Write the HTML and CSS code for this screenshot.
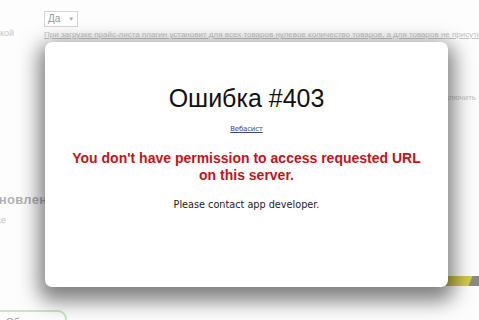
FILE: index.html
```html
<!DOCTYPE html>
<html lang="ru">
	<head>
		<meta charset="UTF-8">
		<meta name="viewport" content="width=device-width, initial-scale=1.0">
		<title>Ошибка #403</title>
		<link rel="stylesheet" href="styles.css">
	</head>
	<body>
		<!-- страница настроек под окном -->
		<div class="page">
			<div class="field">
				<div class="label"><span>Обнулять остаток перед загрузкой</span></div>
				<div class="value">
					<div class="select">Да <span class="arrow">&#9660;</span></div>
					<div class="hint">При загрузке прайс-листа плагин установит для всех товаров нулевое количество товаров, а для товаров не присутствующих в прайсе</div>
				</div>
			</div>

			<div class="field second">
				<div class="label"></div>
				<div class="value">
					<div class="hint plain">Если опция включена, товары без остатка будут скрыты, <span class="tail">выключить</span></div>
				</div>
			</div>

			<h3 class="section">Обновление остатков</h3>

			<div class="field third">
				<div class="label"><span>Обновлять все</span></div>
				<div class="value"></div>
			</div>

			<div class="strip"></div>

			<div class="bottom">
				<div class="button">Обновить</div>
			</div>
		</div>

		<!-- окно ошибки -->
		<div class="dialog">
			<h1 class="title">Ошибка #403</h1>
			<a class="link" href="#">Вебасист</a>
			<p class="error">You don't have permission to access requested URL<br>on this server.</p>
			<p class="note">Please contact app developer.</p>
		</div>
	</body>
</html>
```

FILE: styles.css
```css
* {
	margin: 0;
	padding: 0;
	box-sizing: border-box;
}

html {
	height: 100%;
	background: #fdfdfd;
}

body {
	font-family: "Liberation Sans", Arial, sans-serif;
	height: 100%;
	overflow: hidden;
	color: #bbb;
}

.page {
	padding-top: 11px;
}

/* строка настройки */
.field {
	display: grid;
	grid-template-columns: 44px 1fr;
}

.label {
	display: flex;
	justify-content: flex-end;
	overflow: hidden;
	white-space: nowrap;
	font-size: 9px;
	padding-top: 17px;
	padding-right: 30px;
	color: #c4c4c4;
}

.value {
	overflow: hidden;
	white-space: nowrap;
}

.select {
	width: 34px;
	height: 16px;
	line-height: 14px;
	border: 1px solid #d6d6d6;
	background: #fff;
	font-size: 10px;
	color: #999;
	padding-left: 3px;
}

.arrow {
	font-size: 6px;
	margin-left: 5px;
	color: #aaa;
	vertical-align: 1px;
}

.hint {
	font-size: 8px;
	color: #c2c2c2;
	text-decoration: underline;
	margin-top: 3px;
}

.second {
	margin-top: 51px;
}

.hint.plain {
	text-decoration: none;
	display: flex;
	justify-content: flex-end;
	width: 432px;
	overflow: hidden;
}

.section {
	font-size: 13px;
	font-weight: bold;
	color: #b2b2b2;
	margin-top: 85px;
	margin-left: -20px;
	white-space: nowrap;
	letter-spacing: .3px;
}

.third .label {
	padding-top: 8px;
	padding-right: 38px;
}

/* жёлтая полоса справа */
.strip {
	margin-top: 51px;
	margin-left: 446px;
	height: 10px;
	background: linear-gradient(112deg, #c6bd3c 0%, #d4cb55 70%, #8f8c80 73%, #8a8a84 100%);
}

.bottom {
	margin-top: 24px;
	margin-left: -12px;
}

.button {
	width: 79px;
	height: 22px;
	border: 2px solid #cfe5bd;
	border-radius: 9px;
	font-size: 10px;
	color: #999;
	padding: 5px 0 0 16px;
}

/* окно поверх страницы */
.dialog {
	position: absolute;
	left: 45px;
	top: 42px;
	width: 403px;
	height: 245px;
	background: #fff;
	border-radius: 7px;
	box-shadow: 0 8px 20px 6px rgba(0, 0, 0, .5);
	text-align: center;
	padding-top: 41px;
}

.title {
	font-size: 25px;
	font-weight: normal;
	line-height: 30px;
	color: #111;
}

.link {
	display: inline-block;
	margin-top: 12px;
	font-family: "DejaVu Sans", Verdana, sans-serif;
	font-size: 7px;
	color: #3a4a6a;
	letter-spacing: -.2px;
}

.error {
	margin-top: 15px;
	font-size: 14px;
	line-height: 17px;
	font-weight: bold;
	color: #c0141c;
}

.note {
	margin-top: 15px;
	font-family: "DejaVu Sans", Verdana, sans-serif;
	font-size: 9.7px;
	color: #222;
}
```
